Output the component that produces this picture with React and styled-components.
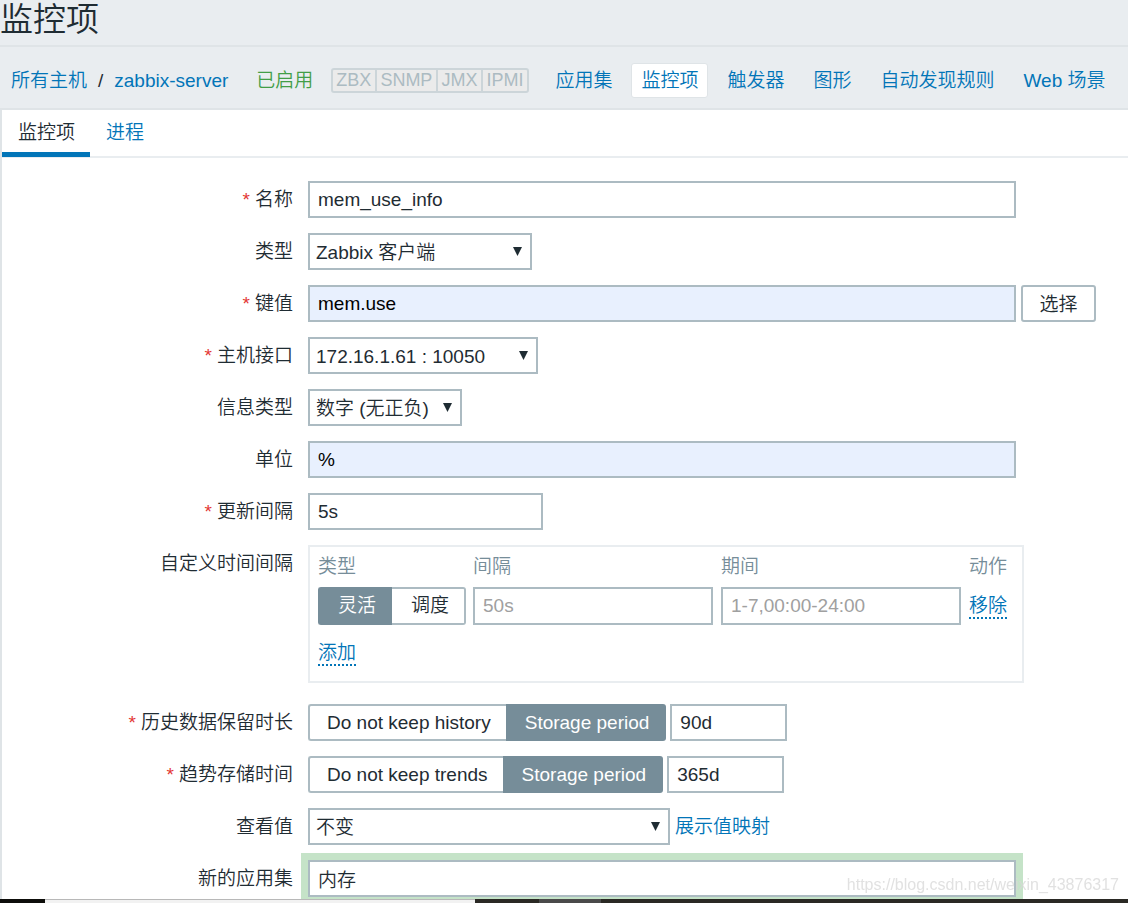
import React, { useState } from "react";
import styled, { createGlobalStyle, css } from "styled-components";

const color = {
  text: "#1f2c33",
  link: "#0275b8",
  green: "#429e47",
  red: "#e33734",
  grey: "#768d99",
  page: "#e9edf0",
  line: "#dfe4e7",
  field: "#acbbc2",
  autofill: "#e8f0fe",
};

const GlobalStyle = createGlobalStyle`
  * { box-sizing: border-box; }
  body {
    margin: 0;
    background: #fff;
    color: ${color.text};
    font: 350 19px/24px "Liberation Sans", "Noto Sans CJK SC", sans-serif;
  }
  input, select, button { font: inherit; color: inherit; }
`;

const Header = styled.header`
  background: ${color.page};
`;

const Title = styled.h1`
  margin: 0;
  padding-bottom: 5px;
  border-bottom: 2px solid ${color.line};
  font-size: 33px;
  line-height: 40px;
  font-weight: 350;
`;

const HostBar = styled.div`
  display: flex;
  align-items: center;
  min-height: 63px;
  padding: 6px 11px 0;
  border-bottom: 2px solid ${color.line};
  white-space: nowrap;
`;

const Link = styled.a`
  color: ${color.link};
  text-decoration: none;
  ${(p) =>
    p.$dotted &&
    css`
      display: inline-block;
      line-height: 23px;
      border-bottom: 2px dotted ${color.link};
    `}
`;

const Crumbs = styled.nav`
  display: flex;
  gap: 11px;
`;

const Enabled = styled.span`
  margin-left: 28px;
  color: ${color.green};
`;

const Badges = styled.div`
  display: flex;
  margin: 0 16px 0 18px;
  border: 2px solid #ccd5d9;
  border-radius: 3px;
  background: #ebebeb;
`;

const Badge = styled.span`
  padding: 0 4px 0 3px;
  color: #acbbc2;
  font-size: 18px;
  line-height: 21px;
  & + & {
    border-left: 2px solid #ccd5d9;
  }
`;

const Sections = styled.nav`
  display: flex;
  gap: 9px;
`;

const SectionLink = styled(Link)`
  padding: 5px 9px 4px;
  border: 1px solid ${(p) => (p.$active ? color.line : "transparent")};
  border-radius: 3px;
  background: ${(p) => (p.$active ? "#fff" : "transparent")};
`;

const Panel = styled.main`
  border-left: 2px solid ${color.line};
  background: #fff;
`;

const Tabs = styled.div`
  display: flex;
  height: 48px;
  border-bottom: 2px solid ${color.page};
`;

const Tab = styled.button`
  height: 47px;
  padding: 4px 15px 0 16px;
  border: 0;
  border-bottom: 5px solid ${(p) => (p.$active ? color.link : "transparent")};
  background: none;
  color: ${(p) => (p.$active ? color.text : color.link)};
`;

const Form = styled.form`
  display: flex;
  flex-direction: column;
  gap: 15px;
  padding: 23px 8px 4px 0;
`;

const Row = styled.div`
  display: grid;
  grid-template-columns: 291px minmax(0, 1fr);
  column-gap: 15px;
`;

const labelText = css`
  text-align: right;
  line-height: 37px;
  ${(p) =>
    p.$required &&
    css`
      &::before {
        content: "*";
        padding-right: 5px;
        color: ${color.red};
      }
    `}
`;

const Label = styled.label`
  ${labelText}
`;

const GroupLabel = styled.span`
  ${labelText}
`;

const Controls = styled.div`
  display: flex;
  align-items: center;
  gap: ${(p) => p.$gap || 4}px;
`;

const Input = styled.input`
  width: ${(p) => p.$width || 708}px;
  max-width: 100%;
  min-width: 0;
  height: ${(p) => p.$height || 37}px;
  padding: 0 8px;
  border: 2px solid ${color.field};
  border-radius: 0;
  outline: 0;
  background: ${(p) => (p.$filled ? color.autofill : "#fff")};
  color: ${(p) => (p.$filled ? "#000" : color.text)};
  box-shadow: ${(p) => (p.$focused ? "0 0 0 7px #c5e3c8" : "none")};
  &::placeholder {
    color: #a0a0a0;
    opacity: 1;
  }
`;

const PickButton = styled.button`
  flex: none;
  width: 75px;
  height: 37px;
  padding: 2px 0 0;
  border: 2px solid ${color.field};
  border-radius: 3px;
  background: #fff;
`;

const SelectBox = styled.div`
  display: grid;
  align-items: center;
  width: ${(p) => p.$width}px;
  & > * {
    grid-area: 1 / 1;
  }
  & > svg {
    justify-self: end;
    margin-right: 10px;
    pointer-events: none;
  }
`;

const NativeSelect = styled.select`
  appearance: none;
  width: 100%;
  height: 37px;
  padding: 2px 24px 0 6px;
  border: 2px solid ${color.field};
  border-radius: 0;
  background: #fff;
`;

const Segments = styled.div`
  display: inline-flex;
  flex: none;
`;

const Segment = styled.label`
  min-width: 74px;
  height: ${(p) => p.$height}px;
  padding: 0 15px;
  border: 2px solid ${color.field};
  line-height: ${(p) => p.$height - 4}px;
  text-align: center;
  white-space: nowrap;
  cursor: pointer;
  &:first-child {
    border-right: 0;
    padding-left: 17px;
    border-radius: 3px 0 0 3px;
  }
  &:last-child {
    border-left: 0;
    padding-left: 19px;
    border-radius: 0 3px 3px 0;
  }
  &:has(input:checked) {
    border-color: ${color.grey};
    background: ${color.grey};
    color: #fff;
  }
`;

const HiddenRadio = styled.input`
  position: absolute;
  width: 1px;
  height: 1px;
  margin: 0;
  opacity: 0;
`;

const IntervalBox = styled.div`
  max-width: 716px;
  margin-bottom: 6px;
  padding: 0 8px;
  border: 2px solid ${color.page};
`;

const IntervalTable = styled.table`
  width: 100%;
  border-collapse: collapse;
  table-layout: fixed;
  th {
    height: 40px;
    padding: 0;
    color: ${color.grey};
    font-weight: 350;
    text-align: left;
  }
  td {
    height: 38px;
    padding: 0 8px 0 0;
    line-height: 0;
  }
  th:first-child { width: 155px; }
  th:last-child { width: 45px; }
  td:first-child, td:last-child { padding: 0; }
  tfoot td { height: 56px; }
`;

const Taskbar = styled.div`
  position: fixed;
  inset: auto 0 0 0;
  display: flex;
  height: 4px;
  background: #2a2924;
`;

const TaskStart = styled.div`
  width: 45px;
  background: #0d0d0a;
`;

const TaskSearch = styled.div`
  width: 430px;
  border-top: 1px solid #b8b8b8;
  background: #f2f2f2;
`;

const TaskItem = styled.div`
  width: 62px;
  margin-left: 64px;
  background: #4a4a4a;
`;

const Watermark = styled.div`
  position: fixed;
  right: 9px;
  bottom: 6px;
  color: rgba(215, 215, 215, 0.75);
  font-size: 16px;
  pointer-events: none;
`;

function Select({ id, width, value }) {
  return (
    <SelectBox $width={width}>
      <NativeSelect id={id} defaultValue={value}>
        <option>{value}</option>
      </NativeSelect>
      <svg width="9" height="9" viewBox="0 0 9 9" aria-hidden="true">
        <path d="M0 0h9L4.5 9z" fill={color.text} />
      </svg>
    </SelectBox>
  );
}

function RadioGroup({ name, label, options, initial, height = 37 }) {
  const [selected, setSelected] = useState(initial);
  return (
    <Segments role="radiogroup" aria-label={label}>
      {options.map((option) => (
        <Segment key={option} $height={height}>
          <HiddenRadio
            type="radio"
            name={name}
            checked={selected === option}
            onChange={() => setSelected(option)}
          />
          {option}
        </Segment>
      ))}
    </Segments>
  );
}

function Field({ id, label, required, gap, children }) {
  return (
    <Row>
      <Label htmlFor={id} $required={required}>{label}</Label>
      <Controls $gap={gap}>{children}</Controls>
    </Row>
  );
}

const sections = ["应用集", "监控项", "触发器", "图形", "自动发现规则", "Web 场景"];

export default function App() {
  return (
    <>
      <GlobalStyle />
      <Header>
        <Title>监控项</Title>
        <HostBar>
          <Crumbs>
            <Link href="#hosts">所有主机</Link>
            <span>/</span>
            <Link href="#host">zabbix-server</Link>
          </Crumbs>
          <Enabled>已启用</Enabled>
          <Badges>
            {["ZBX", "SNMP", "JMX", "IPMI"].map((name) => (
              <Badge key={name}>{name}</Badge>
            ))}
          </Badges>
          <Sections>
            {sections.map((name) => (
              <SectionLink key={name} href="#section" $active={name === "监控项"}>
                {name}
              </SectionLink>
            ))}
          </Sections>
        </HostBar>
      </Header>
      <Panel>
        <Tabs role="tablist">
          <Tab type="button" role="tab" aria-selected="true" $active>监控项</Tab>
          <Tab type="button" role="tab" aria-selected="false">进程</Tab>
        </Tabs>
        <Form>
          <Field id="name" label="名称" required>
            <Input id="name" defaultValue="mem_use_info" />
          </Field>
          <Field id="type" label="类型">
            <Select id="type" width={224} value="Zabbix 客户端" />
          </Field>
          <Field id="key" label="键值" required gap={5}>
            <Input id="key" defaultValue="mem.use" $filled />
            <PickButton type="button">选择</PickButton>
          </Field>
          <Field id="interface" label="主机接口" required>
            <Select id="interface" width={230} value="172.16.1.61 : 10050" />
          </Field>
          <Field id="value-type" label="信息类型">
            <Select id="value-type" width={154} value="数字 (无正负)" />
          </Field>
          <Field id="units" label="单位">
            <Input id="units" defaultValue="%" $filled />
          </Field>
          <Field id="delay" label="更新间隔" required>
            <Input id="delay" defaultValue="5s" $width={235} />
          </Field>
          <Row>
            <GroupLabel>自定义时间间隔</GroupLabel>
            <IntervalBox>
              <IntervalTable>
                <thead>
                  <tr>
                    <th>类型</th>
                    <th>间隔</th>
                    <th>期间</th>
                    <th>动作</th>
                  </tr>
                </thead>
                <tbody>
                  <tr>
                    <td>
                      <RadioGroup name="flex" label="类型" options={["灵活", "调度"]} initial="灵活" height={38} />
                    </td>
                    <td>
                      <Input aria-label="间隔" placeholder="50s" $width={240} $height={38} />
                    </td>
                    <td>
                      <Input aria-label="期间" placeholder="1-7,00:00-24:00" $width={240} $height={38} />
                    </td>
                    <td>
                      <Link href="#remove" $dotted>移除</Link>
                    </td>
                  </tr>
                </tbody>
                <tfoot>
                  <tr>
                    <td colSpan={4}>
                      <Link href="#add" $dotted>添加</Link>
                    </td>
                  </tr>
                </tfoot>
              </IntervalTable>
            </IntervalBox>
          </Row>
          <Field id="history" label="历史数据保留时长" required>
            <RadioGroup
              name="history-mode"
              label="历史数据保留时长"
              options={["Do not keep history", "Storage period"]}
              initial="Storage period"
            />
            <Input id="history" defaultValue="90d" $width={117} />
          </Field>
          <Field id="trends" label="趋势存储时间" required>
            <RadioGroup
              name="trends-mode"
              label="趋势存储时间"
              options={["Do not keep trends", "Storage period"]}
              initial="Storage period"
            />
            <Input id="trends" defaultValue="365d" $width={117} />
          </Field>
          <Field id="valuemap" label="查看值" gap={5}>
            <Select id="valuemap" width={362} value="不变" />
            <Link href="#valuemaps">展示值映射</Link>
          </Field>
          <Field id="application" label="新的应用集">
            <Input id="application" defaultValue="内存" $focused />
          </Field>
        </Form>
      </Panel>
      <Watermark>https://blog.csdn.net/weixin_43876317</Watermark>
      <Taskbar>
        <TaskStart />
        <TaskSearch />
        <TaskItem />
      </Taskbar>
    </>
  );
}
